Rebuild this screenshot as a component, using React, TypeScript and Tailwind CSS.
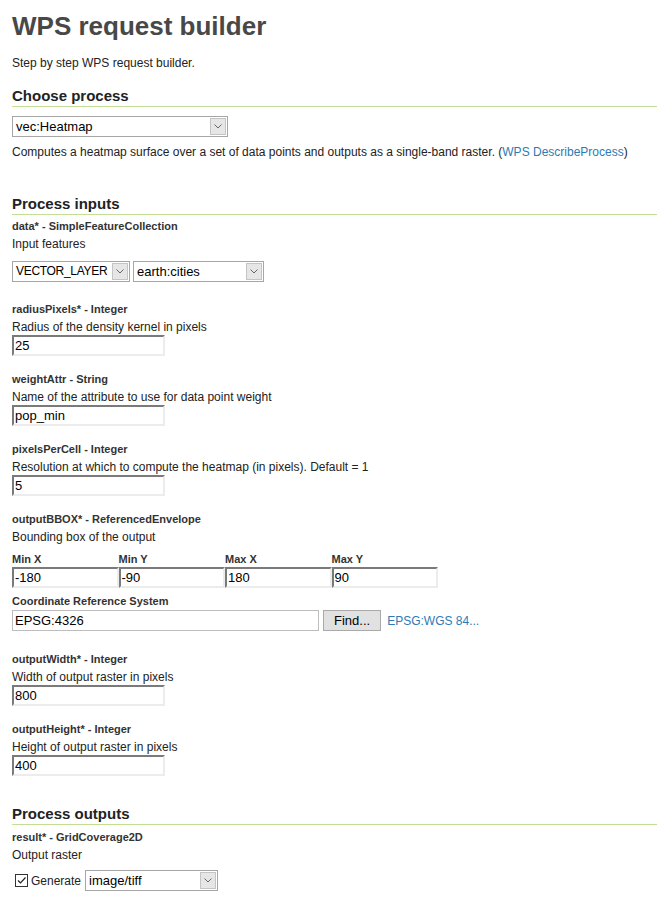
import React from 'react'

function Select({ value, width, textClass = 'text-[13px]' }: { value: string; width: string; textClass?: string }) {
  return (
    <div className={`flex h-[21px] items-stretch border border-[#a6a6a6] bg-white ${width}`}>
      <div className={`flex-1 overflow-hidden whitespace-nowrap pl-[3px] leading-[19px] text-[#000] ${textClass}`}>{value}</div>
      <div className="m-[1px] flex w-[16px] items-center justify-center border border-[#c4c4c4] bg-[#e6e6e6]">
        <svg width="8" height="5" viewBox="0 0 8 5" fill="none" stroke="#666" strokeWidth="1">
          <path d="M0.5 0.5 L4 4 L7.5 0.5" />
        </svg>
      </div>
    </div>
  )
}

function TextInput({ value, width = 'w-[153px]' }: { value: string; width?: string }) {
  return (
    <div className={`h-[21px] border-[2px] border-t-[#7a7a7a] border-l-[#7a7a7a] border-r-[#ececec] border-b-[#ececec] bg-white pl-[1px] text-[13px] leading-[17px] text-black ${width}`}>
      {value}
    </div>
  )
}

function SectionHeader({ title }: { title: string }) {
  return (
    <h2 className="border-b border-[#c3df96] pb-[1px] text-[15px] font-bold leading-[18px] text-[#222]">{title}</h2>
  )
}

function Field({ name, desc, children }: { name: string; desc: string; children: React.ReactNode }) {
  return (
    <div className="mb-[15px]">
      <div className="text-[11px] font-bold leading-[16px] text-[#333]">{name}</div>
      <div className="mt-[2px] text-[12px] leading-[16px] text-[#222]">{desc}</div>
      <div>{children}</div>
    </div>
  )
}

export default function App() {
  const bbox = [
    { label: 'Min X', value: '-180' },
    { label: 'Min Y', value: '-90' },
    { label: 'Max X', value: '180' },
    { label: 'Max Y', value: '90' },
  ]

  return (
    <div className="min-h-[917px] bg-white pl-[12px] pt-[11px] font-['Liberation_Sans',Arial,sans-serif] text-[#222]">
      <h1 className="text-[26px] font-bold leading-[30px] text-[#484848]">WPS request builder</h1>
      <p className="mt-[14px] text-[12px] leading-[16px]">Step by step WPS request builder.</p>

      {/* Choose process */}
      <div className="mt-[16px]">
        <SectionHeader title="Choose process" />
        <div className="mt-[9px]">
          <Select value="vec:Heatmap" width="w-[216px]" />
        </div>
        <p className="mt-[7px] text-[12px] leading-[16px]">
          Computes a heatmap surface over a set of data points and outputs as a single-band raster. (
          <span className="text-[#2d7bb3]">WPS DescribeProcess</span>)
        </p>
      </div>

      {/* Process inputs */}
      <div className="mt-[35px]">
        <SectionHeader title="Process inputs" />
        <div className="mt-[3px]">
          <Field name="data* - SimpleFeatureCollection" desc="Input features">
            <div className="mt-[9px] flex gap-[3px] pb-[4px]">
              <Select value="VECTOR_LAYER" width="w-[118px]" textClass="text-[12px] tracking-[-0.3px]" />
              <Select value="earth:cities" width="w-[131px]" />
            </div>
          </Field>
          <Field name="radiusPixels* - Integer" desc="Radius of the density kernel in pixels">
            <TextInput value="25" />
          </Field>
          <Field name="weightAttr - String" desc="Name of the attribute to use for data point weight">
            <TextInput value="pop_min" />
          </Field>
          <Field name="pixelsPerCell - Integer" desc="Resolution at which to compute the heatmap (in pixels). Default = 1">
            <TextInput value="5" />
          </Field>
          <Field name="outputBBOX* - ReferencedEnvelope" desc="Bounding box of the output">
            <div className="mt-[6px] grid w-[426px] grid-cols-4">
              {bbox.map((b) => (
                <div key={b.label}>
                  <div className="text-[11px] font-bold leading-[16px] text-[#333]">{b.label}</div>
                  <TextInput value={b.value} width="w-full" />
                </div>
              ))}
            </div>
            <div className="mt-[5px] text-[11px] font-bold leading-[16px] text-[#333]">Coordinate Reference System</div>
            <div className="mt-[1px] flex items-center pb-[5px]">
              <div className="h-[21px] w-[307px] border border-[#bdbdbd] bg-white pl-[2px] text-[13px] leading-[19px] text-black">EPSG:4326</div>
              <div className="ml-[4px] h-[21px] border border-[#a9a9a9] bg-[#e1e1e1] px-[10px] text-[13px] leading-[19px] text-black">Find...</div>
              <span className="ml-[6px] text-[12px] text-[#2d7bb3]">EPSG:WGS 84...</span>
            </div>
          </Field>
          <Field name="outputWidth* - Integer" desc="Width of output raster in pixels">
            <TextInput value="800" />
          </Field>
          <Field name="outputHeight* - Integer" desc="Height of output raster in pixels">
            <TextInput value="400" />
          </Field>
        </div>
      </div>

      {/* Process outputs */}
      <div className="mt-[29px]">
        <SectionHeader title="Process outputs" />
        <div className="mt-[4px]">
          <div className="text-[11px] font-bold leading-[16px] text-[#333]">result* - GridCoverage2D</div>
          <div className="mt-[2px] text-[12px] leading-[16px]">Output raster</div>
          <div className="mt-[7px] flex items-center">
            <div className="ml-[3px] flex h-[13px] w-[13px] items-center justify-center border border-[#333] bg-white">
              <svg width="11" height="11" viewBox="0 0 11 11" fill="none" stroke="#222" strokeWidth="1.2">
                <path d="M2 5.5 L4.5 8 L9.5 2.5" />
              </svg>
            </div>
            <span className="ml-[3px] text-[12px] leading-[16px] text-[#222]">Generate</span>
            <div className="ml-[4px]">
              <Select value="image/tiff" width="w-[133px]" />
            </div>
          </div>
        </div>
      </div>
    </div>
  )
}
